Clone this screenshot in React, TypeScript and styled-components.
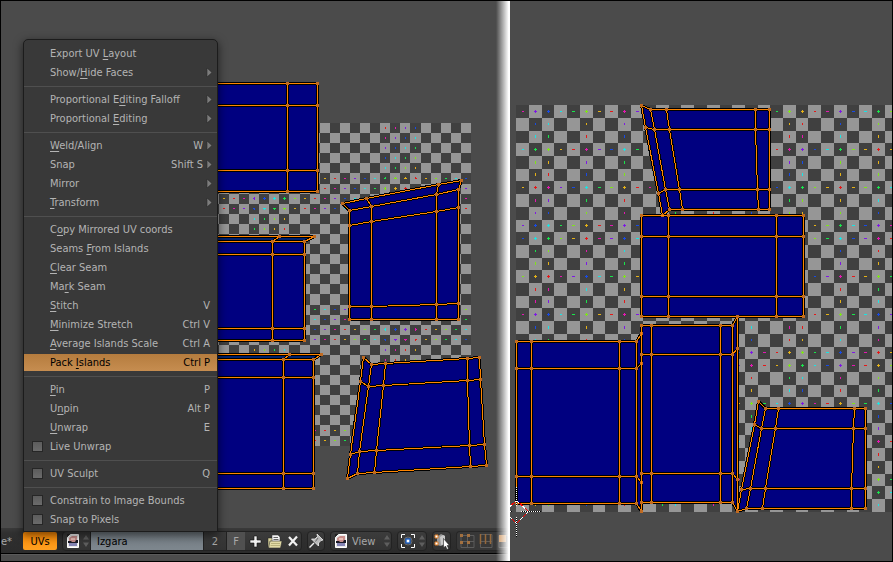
import React from "react";
import styled, { createGlobalStyle, css } from "styled-components";

const FONT = '"DejaVu Sans Condensed", "DejaVu Sans", sans-serif';

const GlobalStyle = createGlobalStyle`
  *, *::before, *::after { box-sizing: border-box; }
  body { margin: 0; background: #4b4b4b; font-family: ${FONT}; font-size: 11px; }
  button, input, select { font: inherit; color: inherit; margin: 0; }
`;

/* ---------- layout ---------- */

const Screen = styled.main`
  display: flex;
  min-height: 100vh;
  border: 1px solid #000;
  background: #4b4b4b;
  overflow: hidden;
`;

const EditorPane = styled.section`
  position: relative;
  display: flex;
  flex-direction: column;
  flex: 509 1 0;
  min-width: 0;
`;

const ResultPane = styled.section`
  flex: 382 1 0;
  min-width: 0;
  overflow: hidden;
`;

const Canvas = styled.div`
  flex: 1;
  min-height: 0;
  overflow: hidden;
`;

const Drawing = styled.svg`
  display: block;
  shape-rendering: crispEdges;
`;

const PaneEdge = styled.div`
  position: absolute;
  top: 0;
  right: 0;
  bottom: 0;
  width: 14px;
  background: linear-gradient(to right, rgba(255, 255, 255, 0), #fff 90%);
  pointer-events: none;
`;

/* ---------- header bar ---------- */

const Header = styled.header`
  display: flex;
  align-items: center;
  height: 26px;
  padding-top: 1px;
  background: linear-gradient(#3a3a3a, #303030 20%, #2b2b2b);
  border-bottom: 1px solid #000;
  color: #a8a8a8;
`;

const NextArea = styled.div`
  height: 7px;
  background: #4c4c4c;
  border-top: 1px solid #5a5a5a;
`;

const TextButton = styled.button`
  width: 22px;
  padding: 0;
  border: 0;
  background: none;
  text-align: left;
`;

const MenuAnchor = styled.div`
  position: relative;
`;

const ActiveMenuButton = styled.button`
  display: block;
  width: 34px;
  height: 18px;
  padding: 0;
  border: 0;
  border-radius: 2px;
  background: linear-gradient(#ff8c05, #ffa021);
  && { color: #000; }
`;

const ControlGroup = styled.div`
  display: flex;
  align-items: center;
  flex: none;
  height: 20px;
  margin-left: 5px;
  border: 1px solid #222;
  border-radius: 4px;
  background: linear-gradient(#3c3c3c, #333);
  overflow: hidden;
`;

const ToolButton = styled.button<{ $w: number; $light?: boolean }>`
  display: flex;
  align-items: center;
  justify-content: center;
  flex: none;
  width: ${(p) => p.$w}px;
  height: 18px;
  padding: 0;
  border: 0;
  border-left: ${(p) => (p.$light ? "1px solid #222" : "0")};
  background: ${(p) => (p.$light ? "#505050" : "none")};
`;

const NameField = styled.input`
  width: 114px;
  height: 18px;
  padding: 0 6px;
  border: 0;
  border-left: 1px solid #222;
  border-right: 1px solid #222;
  background: linear-gradient(#727b82, #7e878e);
  && { color: #000; }
  outline: 0;
`;

const ViewSelect = styled.select`
  width: 33px;
  height: 18px;
  padding: 0 0 0 2px;
  border: 0;
  appearance: none;
  background: none;
  outline: 0;
`;

const ClipGroup = styled.div`
  display: flex;
  flex: 1 1 0;
  min-width: 0;
  height: 20px;
  margin-left: 5px;
  border: 1px solid #262626;
  border-right: 0;
  border-radius: 4px 0 0 4px;
  background: #373737;
  overflow: hidden;
`;

/* ---------- drop-up menu ---------- */

const MenuPanel = styled.div`
  position: absolute;
  bottom: 100%;
  left: 0;
  z-index: 2;
  display: flex;
  flex-direction: column;
  gap: 2px;
  width: 195px;
  padding: 5px 0 3px;
  border: 1px solid #1c1c1c;
  border-radius: 5px 5px 0 0;
  background: #393939;
  box-shadow: 0 3px 9px 1px rgba(0, 0, 0, 0.5);
  color: #b4b4b4;
`;

const Separator = styled.hr`
  align-self: stretch;
  height: 1px;
  margin: 3px 0 2px;
  border: 0;
  background: #4f4f4f;
`;

const rowStyle = css`
  display: flex;
  align-items: center;
  width: 100%;
  height: 17px;
  padding: 0 7px 0 26px;
  border: 0;
  line-height: 17px;
  text-align: left;
  white-space: nowrap;
`;

const MenuItem = styled.button<{ $active?: boolean }>`
  ${rowStyle}
  background: ${(p) => (p.$active ? "linear-gradient(#b57c3e, #c68d50)" : "none")};
  && { color: ${(p) => (p.$active ? "#000" : "inherit")}; }
`;

const CheckItem = styled.label`
  ${rowStyle}
  padding-left: 8px;
`;

const CheckBox = styled.input`
  appearance: none;
  flex: none;
  width: 11px;
  height: 11px;
  border: 1px solid #262626;
  background: linear-gradient(#5c5c5c, #6b6b6b);
  && { margin: 0 7px 0 0; }
`;

const ItemLabel = styled.span`
  flex: 1;
`;

const Mnemonic = styled.span`
  text-decoration: underline;
  text-decoration-thickness: 1px;
  text-underline-offset: 2px;
  text-decoration-skip-ink: none;
`;

const Shortcut = styled.span`
  flex: none;
`;

const SubArrow = styled.svg`
  flex: none;
  width: 7px;
  height: 11px;
  margin: 0 -3px 0 3px;
`;

/* ---------- colour grid texture ---------- */

const CELL = 32;
const TEXELS = 1024;

function hueColor(h: number) {
  const f = (n: number) => {
    const k = (n + h * 6) % 6;
    return Math.round(255 * 0.9 * (1 - 0.9 * Math.max(0, Math.min(k, 4 - k, 1))));
  };
  return `rgb(${f(5)},${f(3)},${f(1)})`;
}

interface Axis {
  start: number;
  end: number;
  from: number;
  to: number;
  hit: number;
}

/* Nearest sampling of the texture along one axis, grouped per checker cell. */
function sampleAxis(origin: number, size: number): Axis[] {
  const cells: Axis[] = [];
  for (let p = Math.floor(origin); p <= origin + size; p++) {
    const t = Math.floor(((p + 0.5 - origin) / size) * TEXELS + 0.001);
    if (t < 0 || t >= TEXELS) continue;
    const k = Math.floor(t / CELL);
    const r = t % CELL;
    if (!cells[k]) cells[k] = { start: p, end: p + 1, from: -1, to: -1, hit: -1 };
    const c = cells[k];
    c.end = p + 1;
    if (Math.abs(r - 16) < 4) {
      if (c.from < 0) c.from = p;
      c.to = p + 1;
    }
    if (r === 16) c.hit = p;
  }
  return cells;
}

function ColorGrid({ x, size, flip }: { x: number; size: number; flip: number }) {
  const axis = sampleAxis(x, size);
  const out: React.ReactElement[] = [];
  axis.forEach((row, j) =>
    axis.forEach((col, i) => {
      const light = (i + j) % 2 === 0;
      const key = `${i}-${j}`;
      out.push(
        <rect key={key} x={col.start} y={flip - row.end + 1} width={col.end - col.start}
          height={row.end - row.start} fill={light ? "#969696" : "#404040"} />
      );
      const fill = hueColor((Math.abs(i - j) * 0.125) % 1);
      if (row.hit >= 0)
        out.push(<rect key={key + "h"} x={col.from} y={flip - row.hit} width={col.to - col.from} height={1} fill={fill} />);
      if (col.hit >= 0)
        out.push(<rect key={key + "v"} x={col.hit} y={flip - row.to + 1} width={1} height={row.to - row.from} fill={fill} />);
    })
  );
  return <g>{out}</g>;
}

/* ---------- UV islands ---------- */

type Pt = [number, number];
interface Island {
  fill: Pt[][];
  lines: Pt[][];
  dots: Pt[];
  tint?: Pt[][];
}

/* A quad mesh given as rows of vertices. */
function mesh(rows: Pt[][]): Island {
  const cols = rows[0].map((_, i) => rows.map((r) => r[i]));
  const outline = [...rows[0], ...cols[cols.length - 1], ...[...rows[rows.length - 1]].reverse(), ...[...cols[0]].reverse()];
  return { fill: [outline], lines: [...rows, ...cols], dots: rows.flat() };
}

function grid(xs: number[], ys: number[]): Island {
  return mesh(ys.map((y) => xs.map((x) => [x, y] as Pt)));
}

const str = (pts: Pt[]) => pts.map(([x, y]) => `${x + 0.5},${y + 0.5}`).join(" ");

function Islands({ items }: { items: Island[] }) {
  return (
    <>
      {items.map((it, n) => (
        <g key={n} fill="none" strokeLinejoin="round">
          {it.fill.map((p, i) => <polygon key={i} points={str(p)} fill="#000080" />)}
          {it.tint?.map((p, i) => <polygon key={i} points={str(p)} fill="#00206c" />)}
          {it.lines.map((p, i) => <polyline key={i} points={str(p)} stroke="#000" strokeWidth={3} />)}
        </g>
      ))}
      {items.map((it, n) => (
        <g key={n} fill="none" strokeLinejoin="round">
          {it.lines.map((p, i) => <polyline key={i} points={str(p)} stroke="#ff8500" strokeWidth={1} />)}
          {it.dots.map(([x, y], i) => <rect key={i} x={x - 1} y={y - 1} width={3} height={3} fill="#c06a20" />)}
        </g>
      ))}
    </>
  );
}

function withFlap(base: Island, flap: Pt[], spokes: Pt[][], dots: Pt[]): Island {
  return {
    fill: base.fill,
    tint: [flap],
    lines: [...base.lines, [...flap], ...spokes],
    dots: [...base.dots, ...dots],
  };
}

const LEFT_ISLANDS: Island[] = [
  grid([150, 287, 317], [83, 105, 170, 191]),
  withFlap(grid([150, 272, 304], [241, 254, 328, 340]),
    [[150, 236], [314, 236], [304, 241], [150, 241]], [[[279, 236], [272, 241]]], [[279, 236], [314, 236]]),
  withFlap(grid([150, 283, 313], [359, 377, 473, 488]),
    [[150, 354], [321, 354], [313, 359], [150, 359]], [[[289, 354], [283, 359]]], [[289, 354], [321, 354]]),
  mesh([
    [[342, 203], [366, 198], [438, 184], [461, 180]],
    [[349, 210], [371, 206], [436, 194], [458, 189]],
    [[349, 225], [371, 221], [436, 211], [458, 207]],
    [[349, 306], [371, 306], [436, 304], [458, 303]],
    [[349, 319], [371, 319], [436, 319], [458, 319]],
  ]),
  mesh([
    [[363, 357], [371, 364], [385, 363], [467, 358], [479, 357]],
    [[360, 381], [368, 386], [383, 385], [467, 380], [480, 379]],
    [[350, 454], [359, 451], [376, 450], [469, 445], [484, 444]],
    [[347, 478], [357, 473], [374, 472], [470, 466], [486, 465]],
  ]),
];

const RIGHT_ISLANDS: Island[] = [
  mesh([
    [[641, 105], [650, 109], [666, 109], [755, 109], [769, 109]],
    [[645, 127], [654, 129], [669, 129], [755, 129], [769, 129]],
    [[658, 193], [665, 189], [679, 189], [757, 189], [769, 189]],
    [[662, 215], [669, 209], [682, 209], [758, 209], [769, 209]],
  ]),
  grid([641, 668, 776, 803], [215, 236, 296, 316]),
  grid([516, 531, 619, 636], [341, 368, 476, 503]),
  mesh([
    [[636, 341], [641, 333]],
    [[636, 368], [641, 363]],
    [[636, 476], [641, 482]],
    [[636, 503], [641, 511]],
  ]),
  grid([641, 651, 720, 732], [325, 354, 473, 502]),
  mesh([
    [[732, 325], [737, 316]],
    [[732, 354], [737, 348]],
    [[732, 473], [737, 479]],
    [[732, 502], [737, 511]],
  ]),
  mesh([
    [[758, 401], [765, 408], [778, 408], [854, 408], [865, 408]],
    [[754, 424], [761, 428], [775, 428], [853, 428], [865, 428]],
    [[741, 489], [750, 488], [765, 488], [851, 488], [865, 488]],
    [[737, 511], [746, 508], [762, 508], [851, 508], [865, 508]],
  ]),
];

function Cursor2D() {
  return (
    <g fill="none" strokeWidth={1}>
      <polygon points="516.5,500.5 528.5,511.5 516.5,523.5 504.5,511.5" stroke="#fff" />
      <polygon points="516.5,500.5 528.5,511.5 516.5,523.5 504.5,511.5" stroke="#f00" strokeDasharray="4 4" strokeDashoffset={-4} />
      {["M516.5 487V506", "M516.5 517V537", "M521 511.5H541", "M510 511.5H512"].map((d) => (
        <g key={d}>
          <path d={d} stroke="#000" />
          <path d={d} stroke="#fff" strokeDasharray="1 1" />
        </g>
      ))}
    </g>
  );
}

/* ---------- icons ---------- */

const ImageIcon = () => (
  <svg width="14" height="16" viewBox="0 0 14 16">
    <path d="M4.5 1.5H12.500V14.500H1.500V4.500Z" fill="#e8e8e8" stroke="#fff" />
    <path d="M1 1H4L1 4Z" fill="#222" />
    <path d="M3 5L6 3H11V9H3Z" fill="#c98f8c" />
    <path d="M5 5H9V7H5Z" fill="#e9c0b8" />
    <path d="M2 8H5L6 9H9L10 7H12V10H2Z" fill="#1a1a26" />
    <path d="M3 10H11V13H3Z" fill="#8585b5" />
  </svg>
);

const UpDown = () => (
  <svg width="8" height="14" viewBox="0 0 8 14">
    <path d="M4 1L7 5.500H1ZM4 13L7 8.500H1Z" fill="#5e5e5e" />
  </svg>
);

const PlusIcon = () => (
  <svg width="13" height="13" viewBox="0 0 13 13">
    <path d="M5 1H8V5H12V8H8V12H5V8H1V5H5Z" fill="#f2f2f2" stroke="#111" strokeWidth="0.600" />
  </svg>
);

const FolderIcon = () => (
  <svg width="16" height="15" viewBox="0 0 16 15">
    <path d="M1 4H5L6 5V13H1Z" fill="#d9d29b" stroke="#222" strokeWidth="0.500" />
    <path d="M5 1H11L13 3V10H5Z" fill="#f4f4f4" stroke="#333" strokeWidth="0.500" />
    <path d="M6.500 3.500H11M6.500 5.500H11.500" stroke="#666" />
    <path d="M3 7H15L13.500 14H1.500Z" fill="#e2dba6" stroke="#333" strokeWidth="0.600" />
    <path d="M4 9.500H13M3.500 11.500H13" stroke="#b9b27c" />
  </svg>
);

const CrossIcon = () => (
  <svg width="12" height="12" viewBox="0 0 12 12">
    <path d="M2 2L10 10.500M10 1.500L2 10.500" stroke="#f2f2f2" strokeWidth="2.200" />
  </svg>
);

const PinIcon = () => (
  <svg width="16" height="16" viewBox="0 0 16 16">
    <path d="M1.500 14.500L6 10" stroke="#eee" strokeWidth="1.500" />
    <path d="M9 1L15 7L13 7.500L10.500 10V13L3.500 6H7L9.500 3.500Z" fill="#b8b8b8" stroke="#f0f0f0" strokeWidth="0.800" />
    <path d="M10 5L7.500 8.500" stroke="#666" />
  </svg>
);

const PivotIcon = () => (
  <svg width="16" height="16" viewBox="0 0 16 16">
    <path d="M1.500 5V1.500H5M11 1.500H14.500V5M14.500 11V14.500H11M5 14.500H1.500V11" fill="none" stroke="#fff" strokeWidth="1" />
    <circle cx="8" cy="8" r="4" fill="none" stroke="#777" strokeWidth="0.800" />
    <rect x="6" y="6" width="4" height="4" fill="#fff" stroke="#2468cc" strokeWidth="1.400" />
  </svg>
);

const SyncIcon = () => (
  <svg width="16" height="17" viewBox="0 0 16 17">
    <path d="M3 4L7 1L11 3V11L7 13L3 12Z" fill="#9a9a9a" />
    <path d="M6 4L9 2L11 3V11L7 12Z" fill="#c9c9c9" />
    <path d="M1 2H4V5H1ZM1 9H4V12H1Z" fill="#fff" stroke="#dd7a22" />
    <path d="M9.500 5.500V15L11.500 13L13 16.500L14.500 15.500L13.200 12.500H15.500Z" fill="#fff" stroke="#222" strokeWidth="0.600" />
  </svg>
);

const VertexIcon = () => (
  <svg width="16" height="16" viewBox="0 0 16 16">
    <path d="M2 2.500H15V14.500H2ZM2 8.500H15M8.500 2V14" fill="none" stroke="#5c5c5c" />
    <path d="M1 1H4V4H1ZM8 1H11V4H8ZM1 8H4V11H1ZM8 8H11V11H8Z" fill="#a3703f" />
  </svg>
);

const EdgeIcon = () => (
  <svg width="16" height="16" viewBox="0 0 16 16">
    <path d="M2.500 1.500H14V14.500H2.500ZM2 8.500H14" fill="none" stroke="#5c5c5c" />
    <path d="M2.500 1V11M7.500 1V11M12.500 1V11" stroke="#96683b" strokeWidth="1.500" />
  </svg>
);

const FaceIcon = () => (
  <svg width="16" height="16" viewBox="0 0 16 16">
    <path d="M2 2.500H14V14.500H2Z" fill="none" stroke="#5c5c5c" />
    <path d="M2 2H9V9H2Z" fill="#c99058" />
  </svg>
);

/* ---------- menu data ---------- */

interface Entry {
  text: string;
  key?: number;
  shortcut?: string;
  sub?: boolean;
  check?: boolean;
  active?: boolean;
}

const SECTIONS: Entry[][] = [
  [{ text: "Export UV Layout", key: 10 }, { text: "Show/Hide Faces", key: 5, sub: true }],
  [{ text: "Proportional Editing Falloff", key: 14, sub: true }, { text: "Proportional Editing", key: 13, sub: true }],
  [
    { text: "Weld/Align", key: 0, shortcut: "W", sub: true },
    { text: "Snap", shortcut: "Shift S", sub: true },
    { text: "Mirror", sub: true },
    { text: "Transform", key: 0, sub: true },
  ],
  [
    { text: "Copy Mirrored UV coords", key: 1 },
    { text: "Seams From Islands", key: 6 },
    { text: "Clear Seam", key: 0 },
    { text: "Mark Seam", key: 2 },
    { text: "Stitch", key: 0, shortcut: "V" },
    { text: "Minimize Stretch", key: 0, shortcut: "Ctrl V" },
    { text: "Average Islands Scale", key: 0, shortcut: "Ctrl A" },
    { text: "Pack Islands", key: 5, shortcut: "Ctrl P", active: true },
  ],
  [
    { text: "Pin", key: 0, shortcut: "P" },
    { text: "Unpin", key: 1, shortcut: "Alt P" },
    { text: "Unwrap", key: 0, shortcut: "E" },
    { text: "Live Unwrap", check: true },
  ],
  [{ text: "UV Sculpt", check: true, shortcut: "Q" }],
  [{ text: "Constrain to Image Bounds", check: true }, { text: "Snap to Pixels", check: true }],
];

function Label({ text, at }: { text: string; at?: number }) {
  if (at === undefined) return <ItemLabel>{text}</ItemLabel>;
  return (
    <ItemLabel>
      {text.slice(0, at)}
      <Mnemonic>{text[at]}</Mnemonic>
      {text.slice(at + 1)}
    </ItemLabel>
  );
}

function Row({ e }: { e: Entry }) {
  const inner = (
    <>
      <Label text={e.text} at={e.key} />
      {e.shortcut && <Shortcut>{e.shortcut}</Shortcut>}
      {e.sub && (
        <SubArrow viewBox="0 0 7 11">
          <path d="M1 1L6 5.500L1 10Z" fill="#7c7c7c" stroke="#2a2a2a" strokeWidth="0.600" />
        </SubArrow>
      )}
    </>
  );
  if (e.check)
    return (
      <CheckItem>
        <CheckBox type="checkbox" />
        {inner}
      </CheckItem>
    );
  return (
    <MenuItem type="button" role="menuitem" $active={e.active}>
      {inner}
    </MenuItem>
  );
}

function UVsMenu() {
  return (
    <MenuPanel role="menu" aria-label="UVs">
      {SECTIONS.map((s, i) => (
        <React.Fragment key={i}>
          {i > 0 && <Separator />}
          {s.map((e) => <Row key={e.text} e={e} />)}
        </React.Fragment>
      ))}
    </MenuPanel>
  );
}

export default function App() {
  return (
    <>
      <GlobalStyle />
      <Screen>
        <EditorPane>
          <Canvas>
            <Drawing width="509" height="527" viewBox="1 1 509 527">
              <ColorGrid x={148.36} size={322.56} flip={593} />
              <Islands items={LEFT_ISLANDS} />
            </Drawing>
          </Canvas>
          <Header>
            <TextButton type="button">e*</TextButton>
            <MenuAnchor>
              <ActiveMenuButton type="button" aria-haspopup="menu" aria-expanded="true">UVs</ActiveMenuButton>
              <UVsMenu />
            </MenuAnchor>
            <ControlGroup>
              <ToolButton $w={19} type="button" aria-label="Browse image"><ImageIcon /></ToolButton>
              <UpDown />
              <NameField aria-label="Image name" defaultValue="Izgara" />
              <ToolButton $w={22} type="button">2</ToolButton>
              <ToolButton $w={19} $light type="button">F</ToolButton>
              <ToolButton $w={21} type="button" aria-label="New image"><PlusIcon /></ToolButton>
              <ToolButton $w={18} type="button" aria-label="Open image"><FolderIcon /></ToolButton>
              <ToolButton $w={17} type="button" aria-label="Unlink"><CrossIcon /></ToolButton>
            </ControlGroup>
            <ControlGroup>
              <ToolButton $w={16} type="button" aria-label="Pin"><PinIcon /></ToolButton>
            </ControlGroup>
            <ControlGroup>
              <ToolButton $w={19} type="button" aria-label="Editor mode"><ImageIcon /></ToolButton>
              <ViewSelect aria-label="Mode"><option>View</option></ViewSelect>
              <UpDown />
            </ControlGroup>
            <ControlGroup>
              <ToolButton $w={20} type="button" aria-label="Pivot"><PivotIcon /></ToolButton>
              <UpDown />
            </ControlGroup>
            <ControlGroup>
              <ToolButton $w={17} type="button" aria-label="Sync selection"><SyncIcon /></ToolButton>
            </ControlGroup>
            <ClipGroup>
              <ToolButton $w={19} type="button" aria-label="Vertex"><VertexIcon /></ToolButton>
              <ToolButton $w={19} type="button" aria-label="Edge"><EdgeIcon /></ToolButton>
              <ToolButton $w={19} type="button" aria-label="Face"><FaceIcon /></ToolButton>
            </ClipGroup>
          </Header>
          <NextArea />
          <PaneEdge />
        </EditorPane>
        <ResultPane>
          <Drawing width="382" height="560" viewBox="510 1 382 560">
            <ColorGrid x={516.4} size={406.4} flip={1027} />
            <Islands items={RIGHT_ISLANDS} />
            <Cursor2D />
          </Drawing>
        </ResultPane>
      </Screen>
    </>
  );
}
